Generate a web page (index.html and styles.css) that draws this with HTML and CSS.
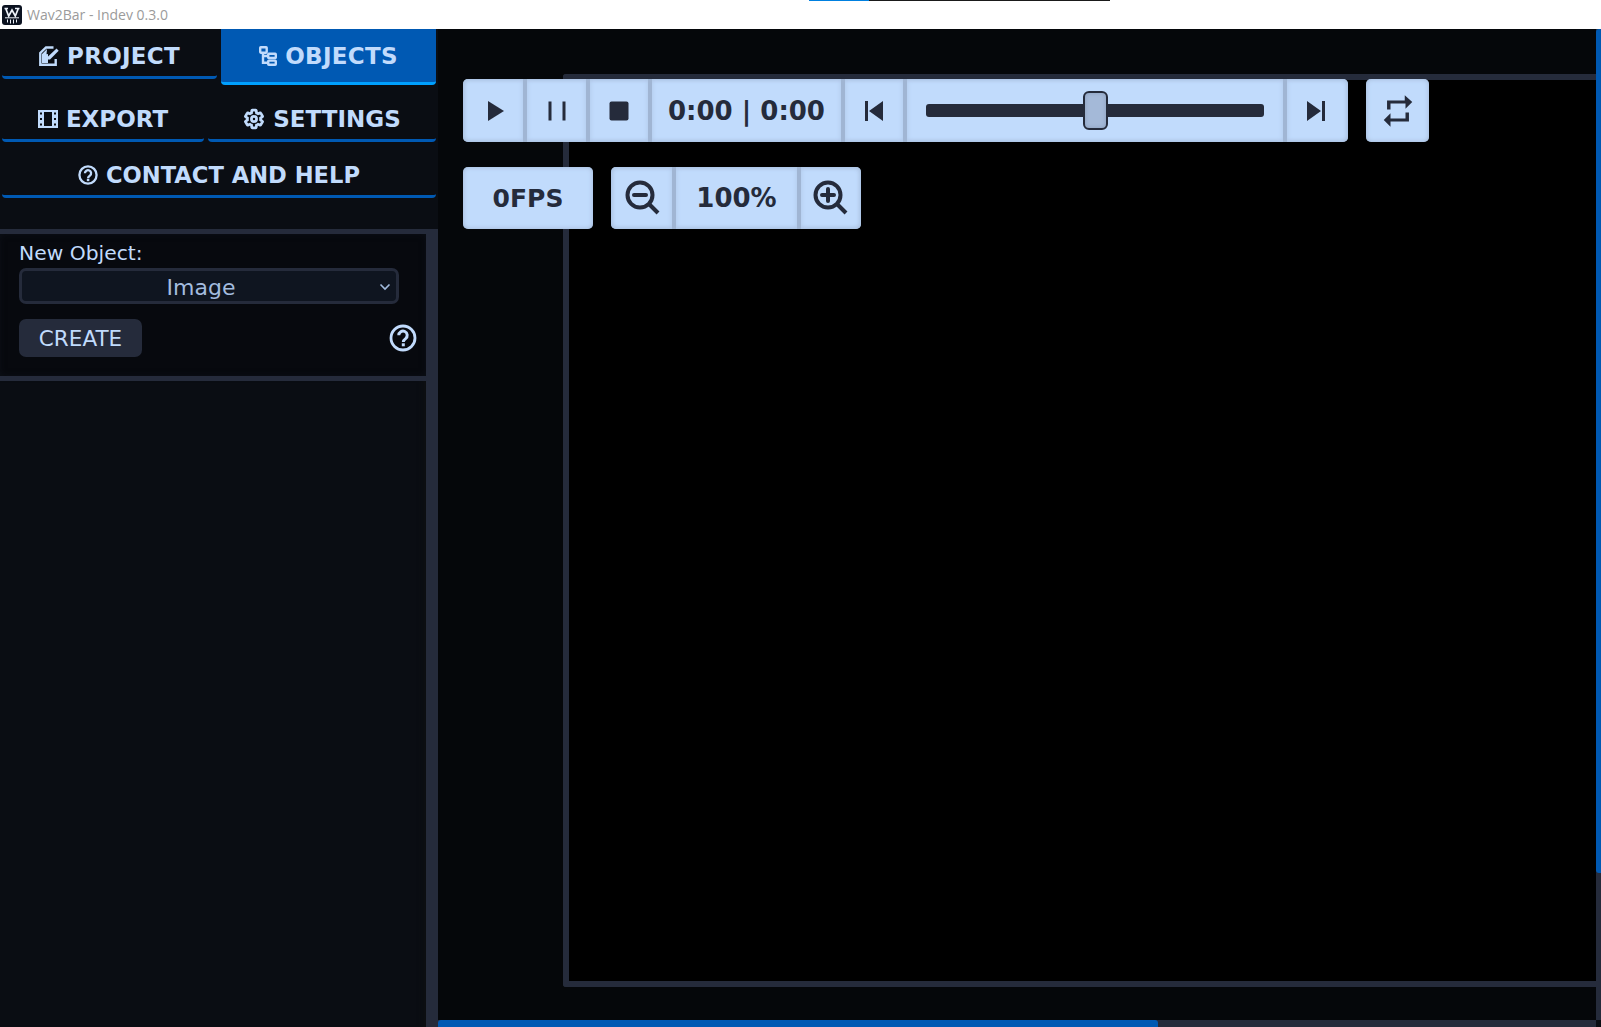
FILE: index.html
```html
<!DOCTYPE html>
<html lang="en">
<head>
<meta charset="utf-8">
<title>Wav2Bar - Indev 0.3.0</title>
<link rel="stylesheet" href="styles.css">
</head>
<body>
<header class="titlebar">
  <svg class="logo" viewBox="0 0 20 20"><rect width="20" height="20" rx="3" fill="#0b1220"/><path d="M2.500 3.500h3.500M13 3.500h4.500M3.700 3.500l3 7.500 3.300-6 3.300 6 3-7.500" fill="none" stroke="#eef3fa" stroke-width="1.700"/><path d="M3 12.800h14M5.500 14.500v3M8.500 14.500v4M11.500 14.500v4M14.500 14.500v3" fill="none" stroke="#eef3fa" stroke-width="1"/></svg>
  <span class="window-title">Wav2Bar - Indev 0.3.0</span>
  <div class="load-line"><span class="load-done"></span></div>
</header>
<div class="app">
  <aside class="sidebar">
    <nav class="tabs">
      <div class="tab-row first">
        <button class="tab"><svg class="tab-icon" viewBox="0 0 20 20"><path d="M14.500 1.500H7L1.300 7v11.700h15.400V13" fill="none" stroke="currentColor" stroke-width="2.400"/><path d="M6 8.500h1.500L8 3 3 8v9h6V8z" fill="currentColor"/><path d="M17.500 2.500l2.200 2.200L11 13.500H8.500V11z" fill="currentColor"/></svg>PROJECT</button>
        <button class="tab active"><svg class="tab-icon slim" viewBox="0 0 18 20"><g fill="none" stroke="currentColor" stroke-width="2.400"><rect x="1.200" y="1.200" width="6.500" height="5.500" rx=".6"/><rect x="9.200" y="7.800" width="7.600" height="4.200" rx=".6"/><rect x="9.200" y="14.600" width="7.600" height="4.200" rx=".6"/><path d="M4 6.600v10.200h5M4 10h5"/></g></svg>OBJECTS</button>
      </div>
      <div class="tab-row second">
        <button class="tab"><svg class="tab-icon" viewBox="0 0 20 18"><path fill-rule="evenodd" d="M0 0h20v18H0zM6 2v14h8V2zM2 2.500v2h2v-2zM2 8v2h2V8zM2 13.500v2h2v-2zM16 2.500v2h2v-2zM16 8v2h2V8zM16 13.500v2h2v-2z" fill="currentColor"/></svg>EXPORT</button>
        <button class="tab grow"><svg class="tab-icon gear" viewBox="0 0 24 24"><path d="M19.140 12.940c.04-.3.06-.61.06-.94 0-.32-.02-.64-.07-.94l2.030-1.580c.18-.14.23-.41.12-.61l-1.920-3.320c-.12-.22-.37-.29-.59-.22l-2.390.96c-.5-.38-1.030-.7-1.620-.94l-.36-2.540c-.04-.24-.24-.41-.48-.41h-3.840c-.24 0-.43.17-.47.41l-.36 2.540c-.59.24-1.130.57-1.620.94l-2.390-.96c-.22-.08-.47 0-.59.22L2.740 8.870c-.12.21-.08.47.12.61l2.030 1.580c-.05.3-.09.63-.09.94s.02.64.07.94l-2.030 1.580c-.18.14-.23.41-.12.61l1.920 3.320c.12.22.37.29.59.22l2.390-.96c.5.38 1.030.7 1.620.94l.36 2.540c.05.24.24.41.48.41h3.840c.24 0 .44-.17.47-.41l.36-2.540c.59-.24 1.130-.56 1.620-.94l2.390.96c.22.08.47 0 .59-.22l1.920-3.320c.12-.22.07-.47-.12-.61z" fill="none" stroke="currentColor" stroke-width="3"/><circle cx="12" cy="12" r="2.800" fill="none" stroke="currentColor" stroke-width="3"/></svg>SETTINGS</button>
      </div>
      <div class="tab-row third">
        <button class="tab"><svg class="tab-icon" viewBox="0 0 24 24"><circle cx="12" cy="12" r="10.300" fill="none" stroke="currentColor" stroke-width="2.800"/><path d="M8.300 9.900a3.700 3.700 0 1 1 6 2.900c-1.300 1-2.200 1.500-2.200 3" fill="none" stroke="currentColor" stroke-width="2.800"/><rect x="10.600" y="16.600" width="3" height="2.800" fill="currentColor"/></svg>CONTACT AND HELP</button>
      </div>
    </nav>
    <div class="panels">
      <div class="panel-stack">
        <section class="new-object">
          <label class="field-label">New Object:</label>
          <div class="select"><span>Image</span><svg class="chevron" viewBox="0 0 12 8"><path d="M1.500 1.500 6 6l4.500-4.500" fill="none" stroke="currentColor" stroke-width="1.600"/></svg></div>
          <div class="create-row">
            <button class="create">CREATE</button>
            <svg class="help" viewBox="0 0 28 28"><circle cx="14" cy="14" r="12" fill="none" stroke="currentColor" stroke-width="2.800"/><path d="M9.800 11.300a4.200 4.200 0 1 1 6.800 3.300c-1.500 1.100-2.300 1.800-2.300 3.400" fill="none" stroke="currentColor" stroke-width="3"/><rect x="12.800" y="19.300" width="3" height="3" fill="currentColor"/></svg>
          </div>
        </section>
        <div class="object-list"></div>
      </div>
      <div class="panel-scroll"></div>
    </div>
  </aside>
  <main class="stage">
    <div class="stage-view">
      <div class="canvas-box"></div>
      <div class="controls">
        <div class="control-row">
          <div class="group player">
            <button class="seg icon"><svg viewBox="0 0 24 24"><path d="M7 2v20L23 12z"/></svg></button>
            <button class="seg icon"><svg viewBox="0 0 24 24"><path d="M3.500 2.500h3v19h-3zM17.500 2.500h3v19h-3z"/></svg></button>
            <button class="seg icon"><svg viewBox="0 0 24 24"><rect x="2.500" y="2.500" width="19" height="19" rx="2"/></svg></button>
            <div class="seg time">0:00 | 0:00</div>
            <button class="seg icon"><svg viewBox="0 0 24 24"><path d="M3 2h3v20H3zM21 2v20L7 12z"/></svg></button>
            <div class="seg slider"><div class="track"><div class="thumb"></div></div></div>
            <button class="seg icon"><svg viewBox="0 0 24 24"><path d="M1 2v20l14-10zM16 2h3v20h-3z"/></svg></button>
          </div>
          <button class="group single loop"><svg viewBox="0 0 24 24"><path d="M7 7h10v3.500L21.500 6 16.500 1.500V5H4.700v6H7zm10 10H7v-3.500L2.500 18l4.500 4.500V19h12.300v-6H17z" fill="currentColor"/></svg></button>
        </div>
        <div class="control-row lower">
          <div class="group single fps">0FPS</div>
          <div class="group zoom">
            <button class="seg icon"><svg viewBox="0 0 36 36"><circle cx="16" cy="15" r="12.500" fill="none" stroke="currentColor" stroke-width="4"/><path d="m25 24 9 9" stroke="currentColor" stroke-width="4"/><path d="M10 15h12" stroke="currentColor" stroke-width="4" stroke-linecap="round"/></svg></button>
            <div class="seg percent">100%</div>
            <button class="seg icon"><svg viewBox="0 0 36 36"><circle cx="15" cy="15" r="12.500" fill="none" stroke="currentColor" stroke-width="4"/><path d="m24 24 9 9" stroke="currentColor" stroke-width="4"/><path d="M9 15h12M15 9v12" stroke="currentColor" stroke-width="4" stroke-linecap="round"/></svg></button>
          </div>
        </div>
      </div>
    </div>
    <div class="vscroll"><div class="vthumb"></div></div>
    <div class="hscroll"><div class="hthumb"></div></div>
    <div class="corner"></div>
  </main>
</div>
</body>
</html>
```
FILE: styles.css
```css
* { box-sizing: border-box; }
html, body { margin: 0; height: 1027px; overflow: hidden; }
body {
  display: flex;
  flex-direction: column;
  background: #05070a;
  font-family: "DejaVu Sans", sans-serif;
  color: #c1dbfc;
}
button { font: inherit; color: inherit; border: 0; margin: 0; padding: 0; }

.titlebar {
  position: relative;
  flex: 0 0 29px;
  display: flex;
  align-items: center;
  gap: 5px;
  padding-left: 2px;
  background: #fff;
}
.logo { width: 20px; height: 20px; }
.window-title {
  font-family: "Open Sans", sans-serif;
  font-size: 14px;
  color: #9b9b9b;
}
.load-line {
  position: absolute;
  left: 809px;
  top: 0;
  width: 301px;
  height: 1px;
  background: #1a1a1a;
}
.load-done { display: block; width: 60px; height: 100%; background: #0080e0; }

.app { flex: 1; min-height: 0; display: flex; }

.sidebar {
  flex: 0 0 438px;
  display: flex;
  flex-direction: column;
  background: #0a0d13;
}
.tabs { flex: 0 0 200px; display: flex; flex-direction: column; }
.tab-row { display: flex; align-items: flex-start; gap: 4px; padding: 0 2px; }
.tab-row.first { height: 63px; font-size: 23px; letter-spacing: .3px; }
.tab-row.second { height: 56px; font-size: 23px; }
.tab-row.third { font-size: 22.600px; }
.tab {
  flex: 1;
  height: 50px;
  display: flex;
  align-items: center;
  justify-content: center;
  gap: 8px;
  padding-top: 7px;
  background: #0a0d13;
  border-bottom: 3px solid #0059b3;
  border-radius: 0 0 4px 4px;
  font-size: inherit;
  letter-spacing: inherit;
  font-weight: 700;
}
.tab.active { height: 56px; background: #0059b3; border-bottom-color: #00a0ff; padding-top: 1px; padding-bottom: 0; }
.second .tab { flex: 0 0 202px; }
.second .tab.grow { flex: 1; }
.tab-icon { width: 20px; height: 20px; flex: none; }
.tab-icon.slim { width: 18px; }
.tab-icon.gear { width: 22px; height: 22px; }

.panels {
  flex: 1;
  min-height: 0;
  display: flex;
  border-top: 5px solid #252b3b;
}
.panel-stack { flex: 1; display: flex; flex-direction: column; }
.panel-scroll { flex: 0 0 12px; background: #252b3b; }
.new-object {
  flex: 0 0 147px;
  padding: 6px 9px 0 19px;
  background: #07090e;
  border-bottom: 5px solid #252b3b;
  box-shadow: inset 0 0 6px #0c0f16;
}
.field-label { display: block; height: 28px; font-size: 20.300px; line-height: 26px; }
.select {
  position: relative;
  width: 380px;
  height: 36px;
  display: flex;
  align-items: center;
  justify-content: center;
  padding: 2px 16px 0 0;
  background: #0f1520;
  border: 3px solid #252b3b;
  border-radius: 7px;
  font-size: 22px;
  color: #a3bcdf;
}
.chevron { position: absolute; right: 5px; top: 12px; width: 12px; height: 8px; color: #a3bcdf; }
.create-row { display: flex; align-items: center; justify-content: space-between; margin-top: 15px; }
.create {
  width: 123px;
  height: 38px;
  background: #252b3b;
  border-radius: 7px;
  font-size: 21.500px;
}
.help { width: 28px; height: 28px; color: #c1dbfc; }
.object-list { flex: 1; background: #0a0d13; box-shadow: inset -8px 0 8px -8px #111; }

.stage {
  flex: 1;
  min-width: 0;
  display: grid;
  grid-template-columns: 1fr 5px;
  grid-template-rows: 1fr 7px;
}
.stage-view {
  position: relative;
  padding: 45px 0 33px 125px;
  background: #05070a;
  overflow: hidden;
}
.canvas-box {
  height: 100%;
  background: #000;
  border: 6px solid #252b3b;
  border-right: 0;
  border-radius: 3px 0 0 3px;
}
.controls {
  position: absolute;
  left: 25px;
  top: 50px;
  display: flex;
  flex-direction: column;
  gap: 25px;
}
.control-row { display: flex; gap: 18px; }
.group {
  display: flex;
  height: 63px;
  background: #c1dbfc;
  border-radius: 5px;
  box-shadow: inset 0 0 5px #a0b5d3;
  color: #252b3b;
}
.lower .group { height: 62px; }
.seg {
  display: flex;
  align-items: center;
  justify-content: center;
  flex: none;
  background: transparent;
  border-right: 4px solid #a0b5d3;
  box-shadow: inset 0 0 5px #aec6e6;
  font-size: 26px;
  font-weight: 700;
  color: #252b3b;
}
.seg:first-child { border-radius: 5px 0 0 5px; }
.seg:last-child { border-right: 0; border-radius: 0 5px 5px 0; }
.seg svg { width: 24px; height: 24px; fill: currentColor; }
.player .seg.icon { width: 62px; }
.player .seg.icon:first-child { width: 64px; }
.player .seg.icon:nth-child(2) { width: 63px; }
.player .seg.icon:last-child { width: 61px; }
.seg.time { width: 193px; }
.seg.slider { width: 380px; padding: 0 19px; }
.track {
  position: relative;
  width: 100%;
  height: 13px;
  background: #252b3b;
  border-radius: 3px;
}
.thumb {
  position: absolute;
  left: 157px;
  top: -13px;
  width: 25px;
  height: 39px;
  background: #a4b9d8;
  border: 2px solid #252b3b;
  border-radius: 6px;
  box-shadow: inset 0 0 4px #8a9dba;
}
.single {
  align-items: center;
  justify-content: center;
  font-size: 26px;
  font-weight: 700;
}
.loop { width: 63px; }
.loop svg { width: 36px; height: 36px; }
.fps { width: 130px; font-size: 25px; }
.zoom .seg.icon { width: 65px; }
.zoom .seg.icon:last-child { width: 60px; }
.zoom .seg.icon svg { width: 36px; height: 36px; fill: none; }
.seg.percent { width: 125px; }

.vscroll { background: #252b3b; }
.vthumb { height: 844px; background: #0059b3; border-radius: 3px 0 0 3px; }
.hscroll { background: #252b3b; }
.hthumb { width: 720px; height: 100%; background: #0059b3; border-radius: 3px 3px 0 0; }
.corner { background: #0a0d13; }
```
